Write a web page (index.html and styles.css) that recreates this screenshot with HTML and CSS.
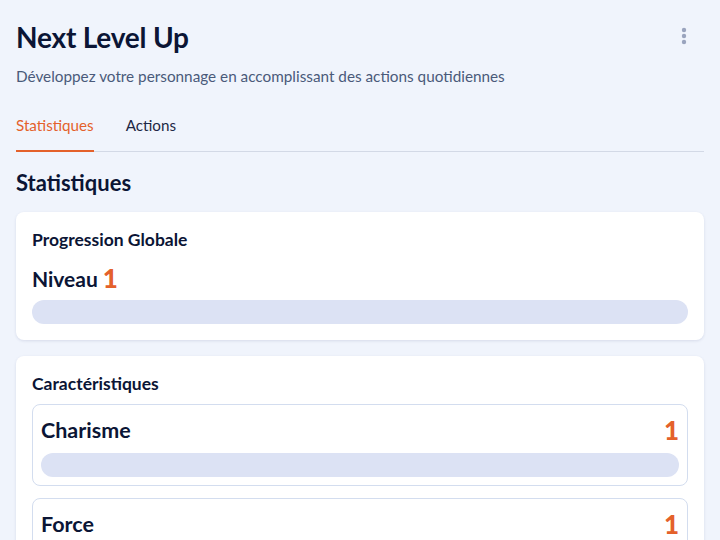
FILE: index.html
```html
<!DOCTYPE html>
<html lang="fr">
<head>
<meta charset="utf-8">
<link rel="stylesheet" href="styles.css">
</head>
<body>
<div class="app">
  <header class="header">
    <h1 class="title">Next Level Up</h1>
    <button class="menu" aria-label="menu">
      <svg width="6" height="18" viewBox="0 0 6 18"><circle cx="3" cy="3" r="2.2" fill="#9aa4be"/><circle cx="3" cy="9" r="2.2" fill="#9aa4be"/><circle cx="3" cy="15" r="2.2" fill="#9aa4be"/></svg>
    </button>
  </header>
  <p class="subtitle">Développez votre personnage en accomplissant des actions quotidiennes</p>
  <nav class="tabs">
    <span class="tab active">Statistiques</span>
    <span class="tab">Actions</span>
  </nav>
  <h2 class="section-title">Statistiques</h2>
  <section class="card">
    <h3 class="card-title">Progression Globale</h3>
    <div class="level">Niveau <span class="num">1</span></div>
    <div class="bar"></div>
  </section>
  <section class="card">
    <h3 class="card-title">Caractéristiques</h3>
    <div class="stat">
      <div class="stat-row"><span class="stat-name">Charisme</span><span class="num">1</span></div>
      <div class="bar"></div>
    </div>
    <div class="stat">
      <div class="stat-row"><span class="stat-name">Force</span><span class="num">1</span></div>
      <div class="bar"></div>
    </div>
  </section>
</div>
</body>
</html>
```
FILE: styles.css
```css
* { box-sizing: border-box; }
html, body { margin: 0; padding: 0; }
body {
  background: #f0f4fc;
  font-family: Lato, "Noto Sans", sans-serif;
  color: #0b1535;
  overflow: hidden;
  height: 540px;
}
.app { padding: 16px 16px 0; }
.header { display: flex; justify-content: space-between; align-items: center; height: 42px; }
.title { margin: 0; font-size: 28px; font-weight: 700; line-height: 42px; letter-spacing: -0.2px; }
.menu { background: none; border: 0; padding: 0; margin: -3px 17px 0 0; display: flex; height: 18px; }
.subtitle { margin: 6px 0 0; font-size: 15.3px; line-height: 24px; color: #4a5a7a; }
.tabs { display: flex; gap: 32px; margin-top: 12px; border-bottom: 1px solid #d3d9e6; }
.tab { font-size: 15.2px; line-height: 24px; padding: 13px 0 13px; margin-bottom: -1px; border-bottom: 2px solid transparent; color: #1d2745; }
.tab.active { color: #e4612b; border-bottom-color: #e4612b; }
.section-title { margin: 16px 0 14px; font-size: 22px; line-height: 30px; font-weight: 700; }
.card {
  background: #fff;
  border-radius: 8px;
  padding: 16px;
  margin-bottom: 16px;
  box-shadow: 0 1px 3px rgba(30, 50, 110, 0.12);
}
.card-title { margin: 0; font-size: 17.5px; line-height: 24px; font-weight: 700; }
.level { margin: 10px 0 6px; height: 32px; display: flex; align-items: center; gap: 5px; font-size: 21px; font-weight: 700; }
.num { color: #e4612b; font-weight: 900; font-size: 26px; line-height: 1; }
.bar { height: 24px; border-radius: 12px; background: #dce2f4; }
.stat { margin-top: 8px; border: 1px solid #d3ddef; border-radius: 8px; padding: 8px; }
.stat + .stat { margin-top: 12px; }
.stat-row { display: flex; justify-content: space-between; align-items: center; height: 34px; margin-bottom: 6px; }
.stat-name { font-size: 21.5px; font-weight: 700; }
```
